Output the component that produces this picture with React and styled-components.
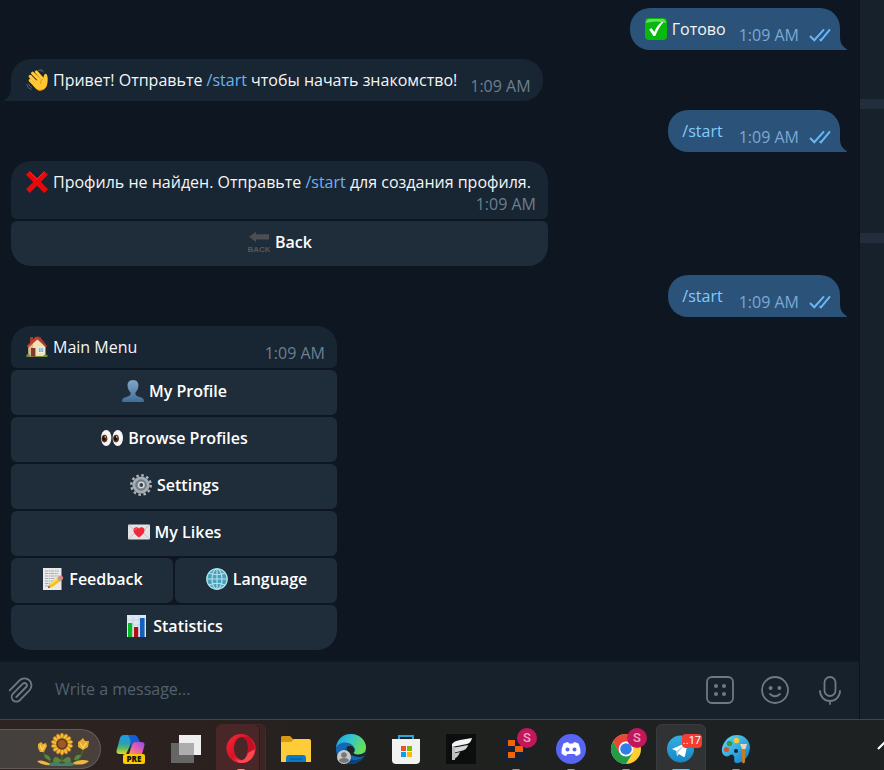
import React from "react";
import styled, { createGlobalStyle, css } from "styled-components";

const GlobalStyle = createGlobalStyle`
  * { box-sizing: border-box; }
  body { margin: 0; background: #0e1621; }
  body, button, input { font-family: "Open Sans", "Noto Sans", sans-serif; font-size: 16px; }
`;

const Screen = styled.div`
  display: flex;
  flex-direction: column;
  min-height: 100vh;
  color: #f5f5f5;
  line-height: 22px;
  overflow: hidden;
`;

const Workspace = styled.div`
  display: flex;
  flex: 1;
`;

const Chat = styled.main`
  display: flex;
  flex-direction: column;
  flex: 1;
  min-width: 0;
  border-right: 1px solid #0c141d;
`;

const History = styled.section`
  display: flex;
  flex-direction: column;
  flex: 1;
  gap: 9px;
  padding: 8px 19px 11px 11px;
`;

const Message = styled.article`
  display: flex;
  flex-direction: column;
  gap: 2px;
  width: ${(p) => p.$width || "auto"};
  max-width: 100%;
  align-self: ${(p) => (p.$out ? "flex-end" : "flex-start")};
`;

const Bubble = styled.div`
  position: relative;
  display: flex;
  flex-direction: ${(p) => (p.$stacked ? "column" : "row")};
  justify-content: space-between;
  column-gap: ${(p) => (p.$command ? "16px" : "13px")};
  padding: 10px 12px 0 15px;
  border-radius: 20px;
  background: #182533;
  ${(p) => p.$keyboard && css`border-radius: 20px 20px 6px 6px;`}
  ${(p) => p.$tail && css`border-bottom-left-radius: 0;`}
  ${(p) =>
    p.$out &&
    css`
      background: #2b5278;
      border-bottom-right-radius: 0;
      padding: 10px 9px 0 ${p.$command ? "14px" : "15px"};
    `}
`;

const TailShape = styled.svg`
  position: absolute;
  bottom: 0;
  width: 7px;
  height: 14px;
  ${(p) => (p.$out ? "left: 100%;" : "right: 100%;")}
  fill: ${(p) => (p.$out ? "#2b5278" : "#182533")};
`;

const Text = styled.div`
  display: flex;
  gap: 5px;
  padding-bottom: ${(p) => (p.$stacked ? "0" : "10px")};
`;

const Command = styled.a`
  color: ${(p) => (p.$out ? "#83caff" : "#6ab3f3")};
  text-decoration: none;
`;

const Meta = styled.div`
  display: flex;
  align-items: center;
  align-self: flex-end;
  gap: 10px;
  padding-bottom: 4px;
  color: ${(p) => (p.$out ? "#7da8d3" : "#6d7f8f")};
  white-space: nowrap;
`;

const Keyboard = styled.div`
  display: flex;
  flex-direction: column;
  gap: 2px;
`;

const KeyRow = styled.div`
  display: flex;
  gap: 2px;
  &:last-child > :first-child { border-bottom-left-radius: 20px; }
  &:last-child > :last-child { border-bottom-right-radius: 20px; }
`;

const Key = styled.button`
  display: flex;
  flex: 1 1 0;
  align-items: center;
  justify-content: center;
  gap: 5px;
  height: 45px;
  padding: 0 7px 3px 8px;
  border: 0;
  border-radius: 6px;
  background: #1f2c39;
  color: #ffffff;
  font-weight: 600;
  cursor: pointer;
`;

const Glyph = styled.svg`
  flex: none;
  width: 22px;
  height: 22px;
`;

const Composer = styled.form`
  display: flex;
  align-items: center;
  height: 58px;
  padding: 0 14px 2px 7px;
  background: #17212b;
  border-top: 1px solid #101923;
`;

const MessageInput = styled.input`
  flex: 1;
  min-width: 0;
  padding: 0 0 1px 20px;
  border: 0;
  outline: 0;
  background: transparent;
  color: #f5f5f5;
  &::placeholder { color: #53606c; opacity: 1; }
`;

const Tools = styled.div`
  display: flex;
  gap: 25px;
`;

const ToolButton = styled.button`
  display: flex;
  padding: 0;
  border: 0;
  background: transparent;
  cursor: pointer;
  svg {
    width: ${(p) => p.$size || 30}px;
    height: ${(p) => p.$size || 30}px;
    fill: none;
    stroke: #6d7a86;
    stroke-width: ${(p) => (p.$size ? 1.6 : 1.8)};
    stroke-linecap: round;
    stroke-linejoin: round;
  }
`;

const SidePanel = styled.aside`
  display: flex;
  flex-direction: column;
  flex: 0 0 24px;
  gap: 10px;
  background: #232e3c;
`;

const PanelBlock = styled.div`
  flex: ${(p) => (p.$height ? `0 0 ${p.$height}px` : "1")};
  background: #17212b;
`;

const Taskbar = styled.footer`
  display: flex;
  gap: 5px;
  height: 51px;
  border-top: 1px solid #484441;
  background: linear-gradient(90deg, #2d2421 0%, #2a211f 28%, #20211f 40%, #1e2122 100%);
  overflow: hidden;
`;

const SearchPill = styled.button`
  display: flex;
  flex: none;
  align-items: center;
  justify-content: flex-end;
  width: 101px;
  height: 40px;
  margin-top: 9px;
  padding: 0 10px 0 0;
  border: 1px solid #625c58;
  border-left: 0;
  border-radius: 0 20px 20px 0;
  background: linear-gradient(90deg, #44403e, #4a403b);
`;

const Tile = styled.button`
  position: relative;
  display: flex;
  flex: none;
  justify-content: center;
  width: 50px;
  height: 52px;
  margin-top: 4px;
  padding: 9px 0 0;
  border: 1px solid transparent;
  border-radius: 6px;
  background: transparent;
  ${(p) => p.$look === "active" && css`background: #303233; border-color: #393c3e;`}
  ${(p) =>
    p.$look === "group" &&
    css`
      background: #492729;
      box-shadow: inset -5px 0 #3c2423, inset -6px 0 #2c1d1c;
    `}
  & > svg { width: 30px; height: 30px; overflow: visible; }
`;

const Running = styled.span`
  position: absolute;
  top: 44px;
  left: 50%;
  width: ${(p) => (p.$wide ? "18px" : "8px")};
  height: 3px;
  transform: translateX(-50%);
  border-radius: 2px;
  background: ${(p) => p.$color || "#9a9a9a"};
`;

const AccountBadge = styled.span`
  position: absolute;
  top: 3px;
  right: 3px;
  width: 20px;
  height: 20px;
  border-radius: 50%;
  background: #c2185b;
  color: #eba9c4;
  font: 500 13px/20px Roboto, sans-serif;
  text-align: center;
`;

const CountBadge = styled.span`
  position: absolute;
  top: 9px;
  right: 3px;
  padding: 0 1px;
  border-radius: 4px;
  background: #f23c34;
  color: #ffffff;
  font: 11px/14px Roboto, sans-serif;
`;

const TrayButton = styled.button`
  flex: none;
  width: 7px;
  height: 50px;
  margin-left: auto;
  padding: 0;
  border: 0;
  background: transparent;
  overflow: hidden;
  svg { display: block; width: 16px; height: 10px; }
`;

const emoji = {
  check: (
    <>
      <rect width="22" height="22" rx="4" fill="#08b80c" />
      <path d="M1 5Q1 1 5 1H17Q21 1 21 5Q11 2 1 5Z" fill="#66dc62" />
      <path d="M4.2 11.4 6.4 10 9.4 14.1C11.2 9.6 13.5 6.3 17 3.6L18.2 4.4C14.7 8.4 12.4 12.6 10.3 18H8.4Z" fill="#fff" />
    </>
  ),
  wave: (
    <>
      <path d="M12 1.6Q14 .2 15.6 2.6M14.4 .4Q17 .4 17.4 3.4M.6 15Q1.2 19.4 5.6 20.6M2.6 14.6Q3.4 17.6 6 18.6" fill="none" stroke="#5b6166" strokeWidth="1" />
      <g stroke="#eea91c" strokeWidth="3.2" strokeLinecap="round">
        <path d="m4.2 11.4 7 7M4.2 7.4 12.6 15.8M6.6 4.2 15 12.6M10.4 3 16.6 10" />
      </g>
      <g stroke="#ffce3f" strokeWidth="2.2" strokeLinecap="round">
        <path d="m4.2 11.4 7 7M4.2 7.4 12.6 15.8M6.6 4.2 15 12.6M10.4 3 16.6 10" />
      </g>
      <path d="M10 11.5 16.6 10C18 9 17.4 4.8 19.6 4.8 22.4 5 22 13 20.8 16.6 19.4 21.2 14 23 10.5 20.2L7 16.6Z" fill="#ffc833" />
      <path d="M16.8 9.8Q13.8 11.6 14.8 15M12 21Q18 22 20.5 17" fill="none" stroke="#e9941a" />
    </>
  ),
  cross: (
    <>
      <path d="M3.8 0 11 7.3 18.2 0 22 3.8 14.8 11 22 18.2 18.2 22 11 14.7 3.8 22 0 18.2 7.2 11 0 3.8Z" fill="#e80a0a" />
      <path d="M3.8.8 11 8 18.2.8" fill="none" stroke="#ff3434" strokeWidth=".8" />
    </>
  ),
  back: (
    <>
      <path d="M1 5.8 8 .8V3.2H21V8.4H8V11Z" fill="#4b4e52" />
      <text x="11" y="21" textAnchor="middle" fill="#55585b" fontFamily="Liberation Sans, sans-serif" fontWeight="700" fontSize="8">BACK</text>
    </>
  ),
  house: (
    <>
      <path d="M4 1H7V6H4Z" fill="#9c3d2e" />
      <path d="M2.5 9.5 11.5 2 19.5 9.5V20.5H2.5Z" fill="#f4dfb4" />
      <path d="M2.5 10 7 6.5V20.5H2.5Z" fill="#dcb98b" />
      <path d="M.7 10.2 9.2 1.1Q10 .4 11 .8L14 1.1 21 10.2 19.6 11.1 11.4 3.6 2.4 11.4Z" fill="#c53e31" />
      <path d="M11 .8 14 1.1 21 10.2 19.6 11.1Z" fill="#a8392d" />
      <path d="M5 12H9.4V20.6H5Z" fill="#7b3f25" />
      <path d="M12.2 11.8H17.8V16.4H12.2Z" fill="#58a7de" stroke="#fff7df" />
      <path d="M15 12V16M12.5 14.1H17.5" stroke="#c7e7f3" strokeWidth=".7" />
      <path d="M.5 18.5Q3 17 4.5 20V21H.5ZM17 21Q18 17.5 21.5 19V21ZM10 20H17V21H10Z" fill="#6c913b" />
    </>
  ),
  person: (
    <>
      <defs>
        <linearGradient id="person" x2="0" y2="1">
          <stop stopColor="#7fa7c9" />
          <stop offset="1" stopColor="#426d98" />
        </linearGradient>
      </defs>
      <path d="M11 0C15 0 16.7 2.8 16.4 6.3 16.2 9 15 11 13.5 12.5 13 15 14 16 17 16.7 20.5 17.5 21.8 18.7 22 21Q22 22 21 22H1Q0 22 0 21C.2 18.7 1.5 17.5 5 16.7 8 16 9 15 8.5 12.5 7 11 5.8 9 5.6 6.3 5.3 2.8 7 0 11 0Z" fill="url(#person)" />
    </>
  ),
  eyes: (
    <>
      <ellipse cx="5.2" cy="11" rx="5.2" ry="8" fill="#f9f7f5" />
      <ellipse cx="16.8" cy="11" rx="5.2" ry="8" fill="#f9f7f5" />
      <ellipse cx="3.5" cy="11.6" rx="2.9" ry="3.8" fill="#5a341a" />
      <ellipse cx="15" cy="11.6" rx="2.9" ry="3.8" fill="#5a341a" />
      <ellipse cx="3" cy="11.6" rx="1.5" ry="2.2" fill="#160e0b" />
      <ellipse cx="14.5" cy="11.6" rx="1.5" ry="2.2" fill="#160e0b" />
      <circle cx="4.2" cy="10" r=".7" fill="#fff" />
      <circle cx="15.7" cy="10" r=".7" fill="#fff" />
    </>
  ),
  gear: (
    <>
      <circle cx="11" cy="11" r="9.7" fill="none" stroke="#aeb6bc" strokeWidth="2.4" strokeDasharray="2.55 2.53" />
      <circle cx="11" cy="11" r="7.2" fill="#7d868e" stroke="#a5adb3" strokeWidth="2.8" />
      <circle cx="11" cy="11" r="4.9" fill="#88929a" stroke="#6a747c" />
      <circle cx="11.3" cy="11" r="2.6" fill="#35434f" stroke="#d3d9dd" strokeWidth="1.4" />
    </>
  ),
  love: (
    <>
      <rect y="3.5" width="22" height="15" rx="1" fill="#e3e3e5" />
      <path d="M.7 4.2 11 12.5 21.3 4.2M.7 18 8 10.5M21.3 18 14 10.5" fill="none" stroke="#b8bbbf" strokeWidth=".8" />
      <path d="M11 16.5C7 13.5 5.5 11.8 5.5 9.3 5.5 6 9.5 5.3 11 7.8 12.5 5.3 16.5 6 16.5 9.3 16.5 11.8 15 13.5 11 16.5Z" fill="#f12838" />
      <path d="M7 9Q7.3 7.5 9 7.5" fill="none" stroke="#ff737b" />
    </>
  ),
  memo: (
    <>
      <path d="M1 0H19.5V22H1Z" fill="#e9e9e8" />
      <path d="M3 3H17M3 5.5H16M3 8H17M3 10.5H13M3 13H11M3 15.5H8M3 18H7" stroke="#a7aaad" strokeWidth="1" strokeDasharray="3 .6 2 .5" />
      <path d="m6 20 1.5-4.2L17 8.5 20 12 10.3 19Z" fill="#f6bd25" />
      <path d="m7.5 15.8 9.5-7.3 1 1.1-9 7.5Z" fill="#ffdc5c" />
      <path d="m16 9.3 2-1.7Q19.7 7 20.8 8.7 21.7 10.2 20.5 11.4L19 12.7Z" fill="#e98282" />
      <path d="m15.2 10 .8-.8 3.1 3.5-1 .7Z" fill="#8ba6bc" />
      <path d="m6 20 .8-2.2 1.3 1.4Z" fill="#333" />
    </>
  ),
  globe: (
    <>
      <circle cx="11" cy="11" r="10.8" fill="#48a2bd" />
      <g fill="none" stroke="#b7e2e9" strokeWidth="1.1">
        <circle cx="11" cy="11" r="10.2" />
        <ellipse cx="11" cy="11" rx="5" ry="10.2" />
        <path d="M11 1V21M1 11H21M3 5Q11 8.5 19 5M3 17Q11 13.5 19 17" />
      </g>
    </>
  ),
  chart: (
    <>
      <path d="M1 0H20V22H1Z" fill="#dce9f2" />
      <path d="M1 5H20M1 10H20M1 15H20M7 0V22M13 0V22" stroke="#bdcedb" strokeWidth=".6" />
      <path d="M2 8H6.2V22H2Z" fill="#08b928" />
      <path d="M8 12H12.2V22H8Z" fill="#b60d14" />
      <path d="M14 3H18.6V22H14Z" fill="#1262bd" />
    </>
  ),
};

const Emoji = ({ name }) => (
  <Glyph viewBox="0 0 22 22" aria-hidden="true">{emoji[name]}</Glyph>
);

const Tail = ({ out }) => (
  <TailShape $out={out} viewBox="0 0 7 14" aria-hidden="true">
    <path d={out ? "M0 0C0 7 2 10 6.4 12.7Q7.4 13.5 6.5 14H0Z" : "M7 0C7 7 5 10 .6 12.7Q-.4 13.5.5 14H7Z"} />
  </TailShape>
);

const Sent = ({ out }) => (
  <Meta $out={out}>
    <time dateTime="01:09">1:09 AM</time>
    {out && (
      <svg width="22" height="14" viewBox="0 0 22 14" fill="none" stroke="#69b7f5" strokeWidth="2" aria-label="Read">
        <path d="m1 8 4.3 4.2L15 1.4M10.6 11.3l1.3 1L21 1.4" />
      </svg>
    )}
  </Meta>
);

const Start = ({ out }) => <Command href="#start" $out={out}>/start</Command>;

const InlineKeyboard = ({ rows }) => (
  <Keyboard>
    {rows.map((row) => (
      <KeyRow key={row[0][1]}>
        {row.map(([icon, label]) => (
          <Key key={label} type="button"><Emoji name={icon} />{label}</Key>
        ))}
      </KeyRow>
    ))}
  </Keyboard>
);

const StartRequest = () => (
  <Message $out>
    <Bubble $out $command>
      <Text><Start out /></Text>
      <Sent out />
      <Tail out />
    </Bubble>
  </Message>
);

const menuRows = [
  [["person", "My Profile"]],
  [["eyes", "Browse Profiles"]],
  [["gear", "Settings"]],
  [["love", "My Likes"]],
  [["memo", "Feedback"], ["globe", "Language"]],
  [["chart", "Statistics"]],
];

const Sunflowers = () => (
  <svg width="54" height="33" viewBox="0 0 54 33" aria-hidden="true">
    <g fill="none" stroke="#47682d" strokeWidth="1.4">
      <path d="M26 17V31M6 17Q9 22 15 30M47 15Q47 23 38 30" />
    </g>
    <path d="M8 22Q13 21 15 27Q9 27 8 22ZM45 22Q39 21 38 27Q44 27 45 22ZM26 28Q18 20 17 28L20 31ZM26 28Q34 20 35 28L32 31Z" fill="#588a36" />
    <path d="M1 28Q7 26 16 32Q6 33 1 28ZM35 31Q44 25 53 28Q49 33 35 31Z" fill="#efb643" />
    <path d="M13 31Q19 27 26 31Q33 27 39 31L36 33H15Z" fill="#43806a" />
    <path d="M2 11 5 9 7 11 10 10 11 13 8 19H4L2 15ZM42 9 45 7 47 5 49 8 53 8 52 14 47 17 42 14Z" fill="#e7a92e" />
    <g fill="#f5bd37" stroke="#a96817" strokeWidth=".5">
      {Array.from({ length: 14 }, (_, i) => (
        <ellipse key={i} cx="26" cy="3.8" rx="2" ry="3.8" transform={`rotate(${(i * 360) / 14} 26 11)`} />
      ))}
    </g>
    <circle cx="26" cy="11" r="5.8" fill="#6b3819" />
    <circle cx="26" cy="11" r="4" fill="#9c5a28" />
    <path d="M44 10 47 15 50 10M4 12 6 17 9 12" fill="none" stroke="#ffd65d" strokeWidth="1.3" />
  </svg>
);

const apps = [
  {
    name: "Copilot",
    art: (
      <>
        <defs>
          <linearGradient id="cpA" x2="0" y2="1"><stop stopColor="#1b9be8" /><stop offset=".45" stopColor="#2b9fb5" /><stop offset=".7" stopColor="#5cba5f" /><stop offset="1" stopColor="#e9d52b" /></linearGradient>
          <linearGradient id="cpB" x1="1" x2="0" y2="1"><stop stopColor="#8b4bf0" /><stop offset=".5" stopColor="#e15eaf" /><stop offset="1" stopColor="#ff9159" /></linearGradient>
        </defs>
        <path d="M8 1H18L13 14 10 20H4Q-1 20 1 15L4 4Q5 1 8 1Z" fill="url(#cpA)" />
        <path d="M12 1H18Q21 1 22 4L24 8H19Q17 8 16 11L14 17Q16 6 12 1Z" fill="#175bd5" />
        <path d="M19 8H25Q30 8 28 13L26 20H13L16 11Q17 8 19 8Z" fill="url(#cpB)" />
        <rect x="7" y="20" width="22" height="10" rx="2" fill="#ffc800" />
        <text x="18" y="28" textAnchor="middle" fontFamily="Open Sans, sans-serif" fontWeight="800" fontSize="8" fill="#17120a">PRE</text>
      </>
    ),
  },
  {
    name: "Task View",
    art: (
      <>
        <path d="M8 1H30V21H8Z" fill="#eeeeee" />
        <path d="M0 9H23V29H0Z" fill="#666" />
        <path d="M8 9H23V21H8Z" fill="#adadad" />
      </>
    ),
  },
  {
    name: "Opera",
    look: "group",
    running: "#f28a8a",
    art: (
      <>
        <defs><linearGradient id="opera" x2="1" y2="1"><stop stopColor="#ff2538" /><stop offset=".5" stopColor="#d71225" /><stop offset="1" stopColor="#ff5963" /></linearGradient></defs>
        <path fillRule="evenodd" d="M15 0A14.5 14.5 0 1 0 15 29 14.5 14.5 0 1 0 15 0ZM16 3C21 3 22 9 22 14.5S20 26 16 26 8 21 8 14.5 11 3 16 3Z" fill="url(#opera)" />
        <path d="M16 3Q24 1 26 7Q32 15 26 23Q22 28 16 26Q22 25 22 14.5Q22 5 16 3Z" fill="#c01224" />
        <path d="M29 15Q27 29 15 29Q12 29 10 25Q18 30 22 19Z" fill="#ff4754" />
      </>
    ),
  },
  {
    name: "File Explorer",
    art: (
      <>
        <path d="M0 3Q0 2 2 2H9L12 5H13V11H0Z" fill="#d69a12" />
        <path d="M0 8H10L13 5H28Q30 5 30 7V28H0Z" fill="#ffcc39" />
        <path d="M5 28V24Q5 21 8 21H22Q25 21 25 24V28Z" fill="#087cc9" />
        <path d="M9 25H21" stroke="#07508e" />
      </>
    ),
  },
  {
    name: "Edge",
    art: (
      <>
        <defs><linearGradient id="edge" x2="1" y2=".4"><stop stopColor="#159fe0" /><stop offset=".5" stopColor="#35c4cf" /><stop offset="1" stopColor="#64df58" /></linearGradient></defs>
        <circle cx="15" cy="15" r="15" fill="#1267b7" />
        <path d="M0 14C1 4 8 0 15 0 24 0 30 7 30 13 30 20 24 22 19 20 16 18 20 17 18 13 14 7 3 7 0 14Z" fill="url(#edge)" />
        <path d="M11 12Q5 21 14 25Q21 28 27 23Q22 31 12 30Q8 25 11 12Z" fill="#084281" />
        <path d="M11 13Q15 10 18 14 20 17 17 19 21 23 30 18L28 22Q23 24 18 22 10 21 11 13Z" fill="#202324" />
        <circle cx="8" cy="23" r="7" fill="#c8c8c8" />
        <circle cx="8" cy="21" r="2.8" fill="#777" />
        <path d="M3 27Q3 24 8 24T13 27Q8 31 3 27Z" fill="#777" />
      </>
    ),
  },
  {
    name: "Microsoft Store",
    art: (
      <>
        <path d="M8 6V2H22V6" fill="none" stroke="#28a5e1" strokeWidth="2" />
        <path d="M1 5H29V26Q29 30 25 30H5Q1 30 1 26Z" fill="#f2f2f2" />
        <path d="M10 12H15V17H10Z" fill="#f25022" />
        <path d="M16 12H21V17H16Z" fill="#7fba00" />
        <path d="M10 18H15V23H10Z" fill="#00a4ef" />
        <path d="M16 18H21V23H16Z" fill="#ffb900" />
      </>
    ),
  },
  {
    name: "Launcher",
    art: (
      <>
        <path d="M0 0H30V30H0Z" fill="#0c0d0e" />
        <path d="M6 10Q8 7 14 6L26 4Q25 9 21 10L6 13Z" fill="#f3f3f3" />
        <path d="M6 14 22 11Q21 16 15 17L11 18 6 19Z" fill="#d6d6d6" />
        <path d="M6 20 14 18Q12 24 6 26Z" fill="#c5c5c5" />
        <path d="M6 13H9V26L6 26Z" fill="#bdbdbd" />
      </>
    ),
  },
  {
    name: "Replit",
    badge: "S",
    running: "#9a9a9a",
    art: (
      <>
        <rect x="3" y="3" width="22" height="24" rx="3" fill="#182033" />
        <path d="M7 6H14V12H7ZM14 12H22V18H14ZM7 18H14V24H7Z" fill="#f26207" />
      </>
    ),
  },
  {
    name: "Discord",
    running: "#9a9a9a",
    art: (
      <>
        <circle cx="15" cy="15" r="15" fill="#5865f2" />
        <path d="M7.500 9.500Q9 8.500 12 8L13 9.500H17L18 8Q21 8.500 22.500 9.500 25 15 24.500 19.500 22 21.500 20 22L18.500 20H11.500L10 22Q8 21.500 5.500 19.500 5 15 7.500 9.500Z" fill="#fff" />
        <circle cx="11.5" cy="15.5" r="2" fill="#5865f2" />
        <circle cx="18.5" cy="15.5" r="2" fill="#5865f2" />
      </>
    ),
  },
  {
    name: "Chrome",
    badge: "S",
    running: "#9a9a9a",
    art: (
      <>
        <circle cx="15" cy="15" r="15" fill="#ffcd36" />
        <path d="M2 7.5A15 15 0 0 1 28 7.5H15L8.500 19Z" fill="#e94538" />
        <path d="M2 7.5A15 15 0 0 0 15 30L21.500 19H8.500Z" fill="#229b4a" />
        <circle cx="15" cy="15" r="7.4" fill="#fff" />
        <circle cx="15" cy="15" r="5.8" fill="#317deb" />
      </>
    ),
  },
  {
    name: "Telegram",
    look: "active",
    count: "..17",
    running: "#4cc2ff",
    art: (
      <>
        <defs><linearGradient id="tg" x2="0" y2="1"><stop stopColor="#36afe2" /><stop offset="1" stopColor="#1686c4" /></linearGradient></defs>
        <circle cx="14.5" cy="15" r="13.5" fill="url(#tg)" />
        <path d="M6 15 22 8 19 22Q18.500 24 16 22L13 20 11 22 10.500 17Z" fill="#fff" />
        <path d="m10.500 17 8-6-6 7L11 22Z" fill="#aad6ea" />
      </>
    ),
  },
  {
    name: "Paint",
    running: "#9a9a9a",
    art: (
      <>
        <defs><linearGradient id="paint" x2="1" y2="1"><stop stopColor="#63dcf3" /><stop offset="1" stopColor="#087bd2" /></linearGradient></defs>
        <path d="M16 1C24 1 29 7 29 14 28 23 22 29 16 29 11 29 15 23 12 21 9 19 8 24 4 22 0 20 0 14 3 9 6 4 10 1 16 1Z" fill="url(#paint)" />
        <circle cx="15.500" cy="6.500" r="2.7" fill="#ffcb23" />
        <circle cx="8.500" cy="9.500" r="2.7" fill="#399b32" />
        <circle cx="5.500" cy="15.500" r="2.6" fill="#ce5733" />
        <circle cx="15" cy="17" r="2" fill="#202324" />
        <path d="M19 10H26L24.500 15H21Z" fill="#efd3b2" />
        <path d="M21 15H24V28Q22.500 31 21 28Z" fill="#c67b27" />
      </>
    ),
  },
];

export default function App() {
  return (
    <Screen>
      <GlobalStyle />
      <Workspace>
        <Chat>
          <History>
            <Message $out>
              <Bubble $out>
                <Text><Emoji name="check" />Готово</Text>
                <Sent out />
                <Tail out />
              </Bubble>
            </Message>
            <Message>
              <Bubble $tail>
                <Text>
                  <Emoji name="wave" />
                  <span>Привет! Отправьте <Start /> чтобы начать знакомство!</span>
                </Text>
                <Sent />
                <Tail />
              </Bubble>
            </Message>
            <StartRequest />
            <Message $width="537px">
              <Bubble $stacked $keyboard>
                <Text $stacked>
                  <Emoji name="cross" />
                  <span>Профиль не найден. Отправьте <Start /> для создания профиля.</span>
                </Text>
                <Sent />
              </Bubble>
              <InlineKeyboard rows={[[["back", "Back"]]]} />
            </Message>
            <StartRequest />
            <Message $width="326px">
              <Bubble $keyboard>
                <Text><Emoji name="house" />Main Menu</Text>
                <Sent />
              </Bubble>
              <InlineKeyboard rows={menuRows} />
            </Message>
          </History>
          <Composer onSubmit={(e) => e.preventDefault()}>
            <ToolButton type="button" aria-label="Attach" $size={28}>
              <svg viewBox="0 0 24 24">
                <path transform="rotate(180 12 12)" d="m16 6-8.414 8.586a2 2 0 0 0 2.829 2.829l8.414-8.586a4 4 0 1 0-5.657-5.657l-8.379 8.551a6 6 0 1 0 8.485 8.485l8.379-8.551" />
              </svg>
            </ToolButton>
            <MessageInput aria-label="Message" placeholder="Write a message..." />
            <Tools>
              <ToolButton type="button" aria-label="Bot commands">
                <svg viewBox="0 0 30 30">
                  <rect x="2" y="2" width="26" height="26" rx="5" />
                  <g fill="#6d7a86" stroke="none">
                    <circle cx="11" cy="11" r="2" /><circle cx="19" cy="11" r="2" />
                    <circle cx="11" cy="19" r="2" /><circle cx="19" cy="19" r="2" />
                  </g>
                </svg>
              </ToolButton>
              <ToolButton type="button" aria-label="Emoji">
                <svg viewBox="0 0 30 30">
                  <circle cx="15" cy="15" r="13" />
                  <path d="M10 19Q15 23.500 20 19" />
                  <g fill="#6d7a86" stroke="none"><circle cx="10.6" cy="13" r="2" /><circle cx="19.4" cy="13" r="2" /></g>
                </svg>
              </ToolButton>
              <ToolButton type="button" aria-label="Record voice">
                <svg viewBox="0 0 30 30">
                  <rect x="9.5" y="2" width="11" height="19" rx="5.5" />
                  <path d="M5 16A10 10 0 0 0 25 16M15 26V29" />
                </svg>
              </ToolButton>
            </Tools>
          </Composer>
        </Chat>
        <SidePanel aria-label="Details">
          <PanelBlock $height={99} />
          <PanelBlock $height={124} />
          <PanelBlock />
        </SidePanel>
      </Workspace>
      <Taskbar>
        <SearchPill type="button" aria-label="Search"><Sunflowers /></SearchPill>
        {apps.map((app) => (
          <Tile key={app.name} type="button" aria-label={app.name} $look={app.look}>
            <svg viewBox="0 0 30 30" aria-hidden="true">{app.art}</svg>
            {app.badge && <AccountBadge>{app.badge}</AccountBadge>}
            {app.count && <CountBadge>{app.count}</CountBadge>}
            {app.running && <Running $color={app.running} $wide={app.look === "active"} />}
          </Tile>
        ))}
        <TrayButton type="button" aria-label="Show hidden icons">
          <svg viewBox="0 0 16 10" fill="none" stroke="#fff" strokeWidth="2"><path d="m1 9 7-7 7 7" /></svg>
        </TrayButton>
      </Taskbar>
    </Screen>
  );
}
